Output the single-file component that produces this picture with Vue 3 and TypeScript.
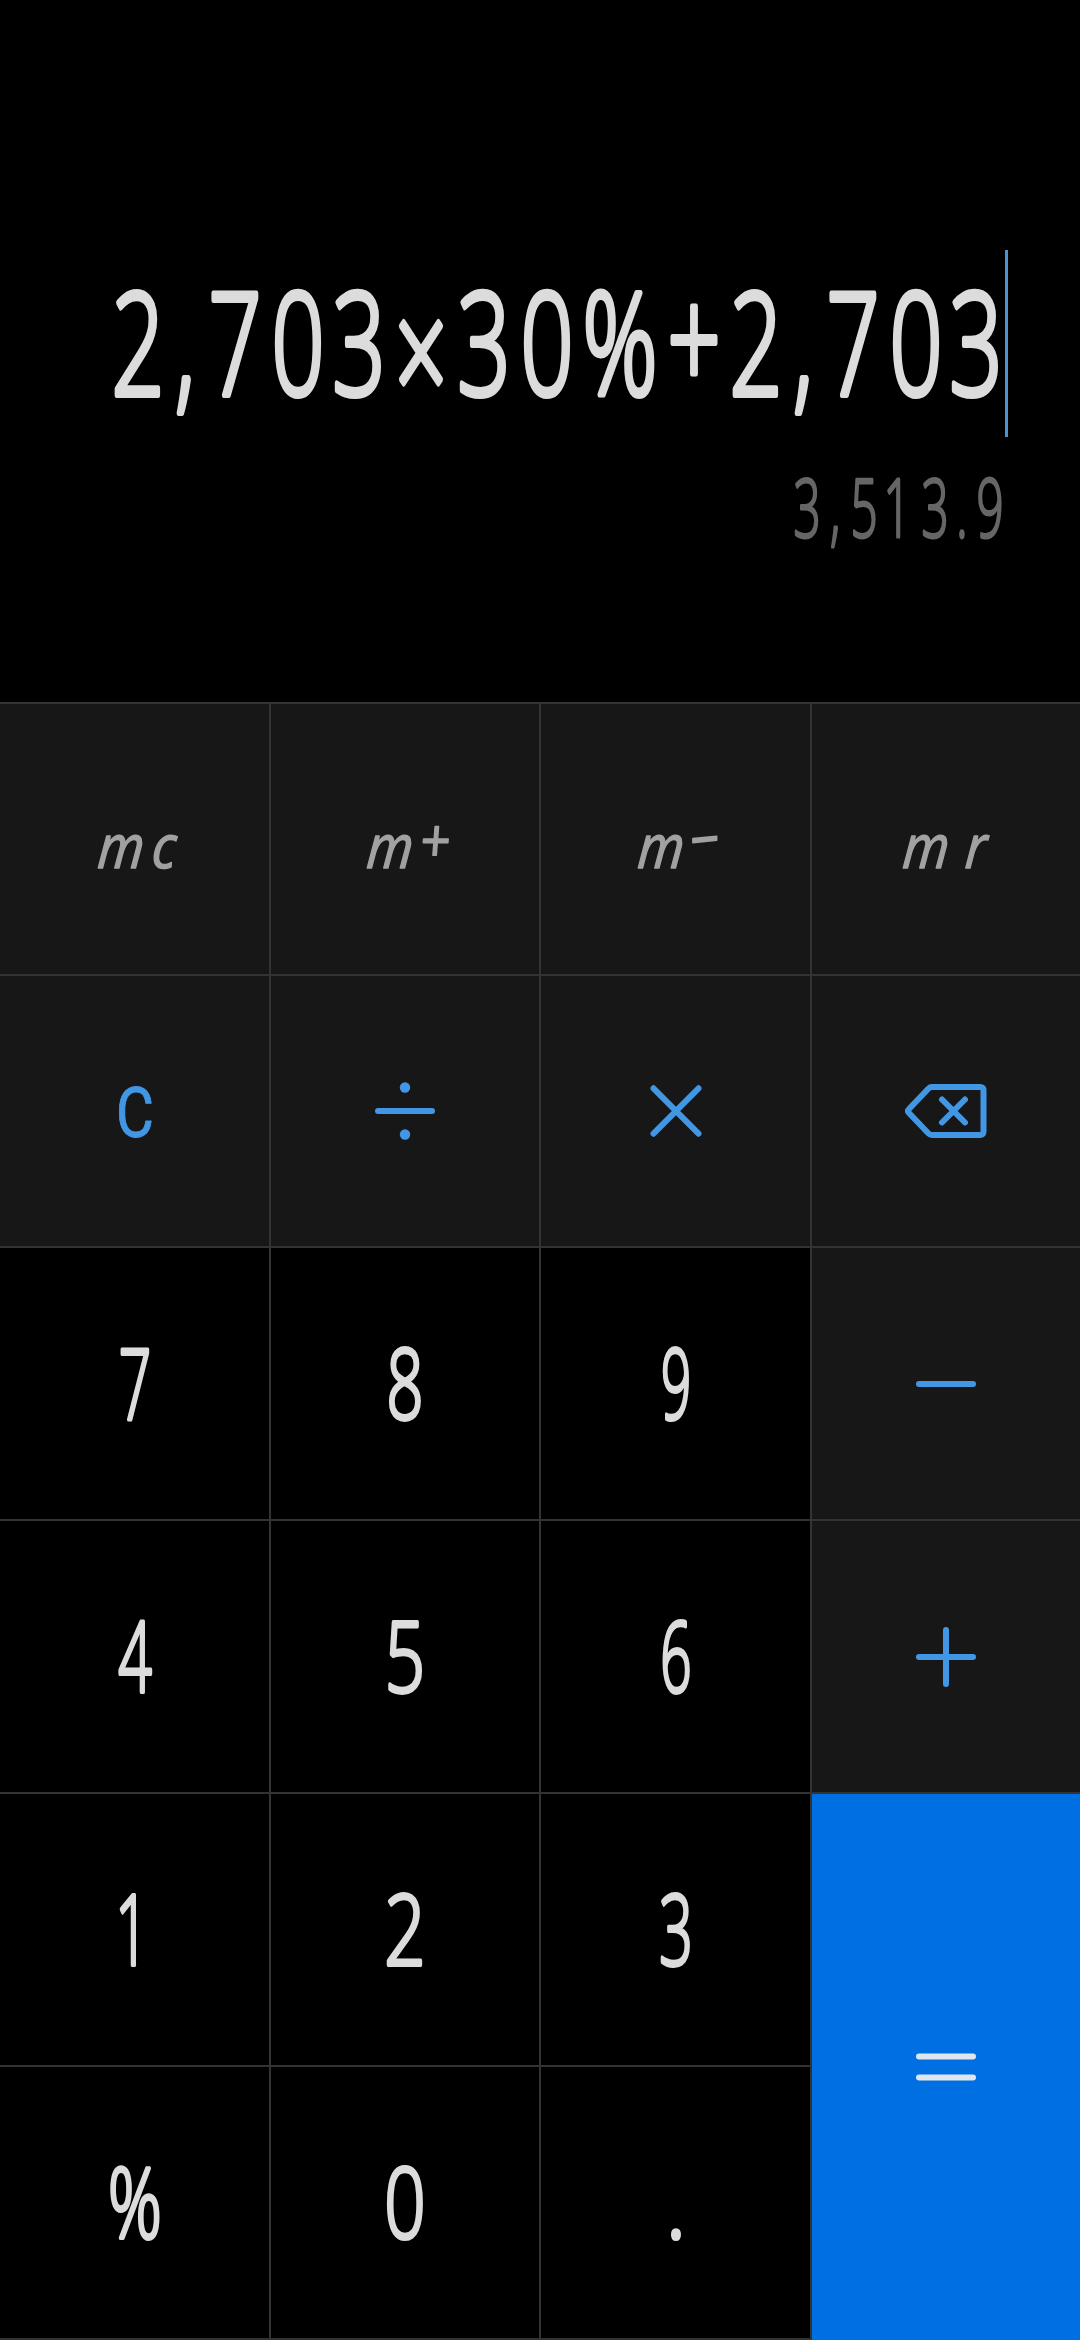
<script setup lang="ts">
interface Line {
  text: string
  /** horizontal centre of each character */
  xs: number[]
  ys: number[]
  /** horizontal condensing of the glyphs */
  sx: number
  rotate?: string
  skew?: number
}

interface Key {
  id: string
  kind: 'memory' | 'digit' | 'op' | 'equals' | 'clear'
  line?: Line
}

const expression: Line = {
  text: '2,703×30%+2,703',
  xs: [138, 185, 235, 298, 359, 421, 484, 547, 620, 694, 756, 803, 853, 916, 976],
  ys: [395, 395, 395, 395, 395, 403, 395, 395, 395, 390, 395, 395, 395, 395, 395],
  sx: 0.65
}

const result: Line = {
  text: '3,513.9',
  xs: [807, 835, 864, 897, 935, 962, 990],
  ys: [537],
  sx: 0.58
}

const memory = (id: string, x0: number, x1: number, y1 = 29, rotate = '0'): Key => ({
  id,
  kind: 'memory',
  line: { text: id, xs: [x0, x1], ys: [29, y1], sx: 0.88, rotate, skew: -5 }
})

const digit = (id: string, sx: number, x = 0): Key => ({
  id,
  kind: 'digit',
  line: { text: id, xs: [x], ys: [35], sx }
})

const keys: Key[] = [
  memory('mc', -13, 30),
  memory('m+', -14, 30, 23),
  memory('m−', -14, 30, 23, '0 -5'),
  memory('mr', -19, 31),
  { id: 'C', kind: 'clear', line: { text: 'C', xs: [0], ys: [25.5], sx: 0.82 } },
  { id: 'divide', kind: 'op' },
  { id: 'times', kind: 'op' },
  { id: 'delete', kind: 'op' },
  digit('7', 0.58), digit('8', 0.66), digit('9', 0.54),
  { id: 'minus', kind: 'op' },
  digit('4', 0.6), digit('5', 0.72), digit('6', 0.56),
  { id: 'plus', kind: 'op' },
  digit('1', 0.6, -3), digit('2', 0.74), digit('3', 0.6),
  { id: 'equals', kind: 'equals' },
  digit('%', 0.68), digit('0', 0.74), digit('.', 0.85)
]

const icons: Record<string, string> = {
  divide: 'M-27 0H27',
  times: 'M-22.5 -22.7L22.5 22.7M22.5 -22.7L-22.5 22.7',
  delete:
    'M-14 -24H34Q37.500 -24 37.500 -20.500V20.500Q37.500 24 34 24H-14Q-16 24 -17.500 22.500L-37 2Q-39 0 -37 -2L-17.500 -22.500Q-16 -24 -14 -24ZM-4 -11.500L19 11.500M19 -11.500L-4 11.500',
  minus: 'M-27 0H27',
  plus: 'M-27 0H27M0 -27V27',
  equals: 'M-27 -10.500H27M-27 10.500H27'
}

const xList = (l: Line) => l.xs.map(x => (x / l.sx).toFixed(2)).join(' ')
const yList = (l: Line) => l.ys.join(' ')
const squeeze = (l: Line) => `scale(${l.sx} 1) skewX(${l.skew ?? 0})`
</script>

<template>
  <main class="calculator">
    <section class="display">
      <div class="entry">
        <svg class="expression" viewBox="0 230 1005 210">
          <text :x="xList(expression)" :y="yList(expression)" :transform="squeeze(expression)">{{ expression.text }}</text>
        </svg>
        <span class="caret"></span>
      </div>
      <svg class="result" viewBox="0 440 1080 140">
        <text :x="xList(result)" :y="yList(result)" :transform="squeeze(result)">{{ result.text }}</text>
      </svg>
    </section>

    <section class="pad">
      <button v-for="key in keys" :key="key.id" class="key" :class="key.kind">
        <svg viewBox="-80 -100 160 200">
          <text
            v-if="key.line"
            :x="xList(key.line)"
            :y="yList(key.line)"
            :rotate="key.line.rotate"
            :transform="squeeze(key.line)"
          >{{ key.line.text }}</text>
          <path v-else :d="icons[key.id]" />
          <template v-if="key.id === 'divide'">
            <circle cy="-23.500" r="5.200" />
            <circle cy="23.500" r="5.200" />
          </template>
        </svg>
      </button>
    </section>
  </main>
</template>

<style>
body {
  background: #000;
}
</style>

<style scoped>
.calculator {
  width: 1080px;
  height: 2340px;
  display: flex;
  flex-direction: column;
  background: #000;
  overflow: hidden;
}

.display {
  height: 702px;
  box-sizing: border-box;
  padding-top: 230px;
}

.entry {
  display: flex;
  height: 210px;
}

.expression {
  width: 1005px;
  height: 210px;
}

.caret {
  width: 3px;
  height: 187px;
  margin-top: 20px;
  background: #4c93d6;
}

.result {
  display: block;
  width: 1080px;
  height: 140px;
}

svg {
  overflow: visible;
}

text {
  font-family: 'Open Sans', 'Noto Sans', sans-serif;
  font-weight: 300;
  text-anchor: middle;
  stroke-linejoin: round;
  stroke-linecap: round;
}

.expression text {
  font-size: 143px;
  fill: #dcdcdc;
  stroke: #dcdcdc;
  stroke-width: 6px;
}

.result text {
  font-size: 82px;
  fill: #666;
  stroke: #666;
  stroke-width: 3px;
}

.pad {
  display: grid;
  grid-template-columns: 271px 270px 271px 268px;
  grid-template-rows: 272px 272px repeat(3, 273px) 275px;
}

.key {
  display: flex;
  align-items: center;
  justify-content: center;
  margin: 0;
  padding: 0;
  border: 0 solid #333;
  border-top-width: 2px;
  border-right-width: 2px;
  background: #171717;
}

.key:nth-child(4n),
.key.equals {
  border-right-width: 0;
}

.key.digit {
  background: #000;
}

.key:nth-child(n + 21) {
  border-bottom-width: 2px;
}

.key.equals {
  grid-row: span 2;
  background: #006fe1;
}

.key svg {
  width: 160px;
  height: 200px;
}

.key path {
  fill: none;
  stroke: #4297e5;
  stroke-width: 6px;
  stroke-linecap: round;
  stroke-linejoin: round;
}

.key circle {
  fill: #4297e5;
}

.key.equals path {
  stroke: #e0e6ee;
}

.memory text {
  font-size: 60px;
  font-style: italic;
  font-weight: 400;
  fill: #a1a1a1;
  stroke: #a1a1a1;
  stroke-width: 1.5px;
}

.digit text {
  font-size: 98px;
  fill: #dcdcdc;
  stroke: #dcdcdc;
  stroke-width: 4px;
}

.clear text {
  font-family: Roboto, sans-serif;
  font-size: 71px;
  font-weight: 400;
  fill: #4297e5;
  stroke: #4297e5;
  stroke-width: 1px;
}
</style>
